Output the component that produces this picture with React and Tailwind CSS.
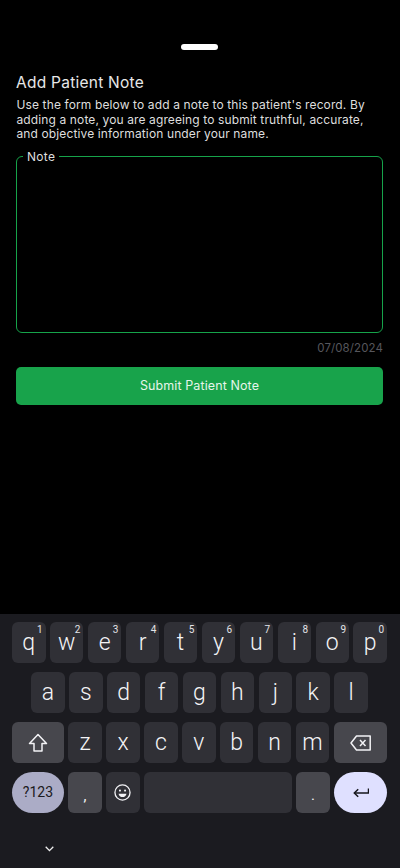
import React from "react";

const kf = { fontFamily: '"Roboto", "Liberation Sans", sans-serif' };

function Key({ label, sup, bg = "bg-[#303036]", className = "", textClass = "text-[23px] font-light" }) {
  return (
    <div className={`relative flex h-[41px] items-center justify-center rounded-[6px] text-[#f4f4f6] ${bg} ${className}`}>
      <span className={`${textClass} leading-none`}>{label}</span>
      {sup && <span className="absolute right-[3px] top-[3px] text-[10px] leading-none text-[#e4e4e8]">{sup}</span>}
    </div>
  );
}

const Shift = () => (
  <svg className="block" width="20" height="20" viewBox="0 0 20 20" fill="none" stroke="#f2f2f5" strokeWidth="1.5" strokeLinejoin="round">
    <path d="M10 1.5 L18.5 10.5 H14 V18 H6 V10.5 H1.5 Z" />
  </svg>
);
const Back = () => (
  <svg className="block" width="21" height="16" viewBox="0 0 21 16" fill="none" stroke="#f2f2f5" strokeWidth="1.5" strokeLinejoin="round">
    <path d="M6.5 1 H20.2 V15 H6.5 L1 8 Z" />
    <path d="M10 5 L15.5 11 M15.5 5 L10 11" />
  </svg>
);
const Smile = () => (
  <svg className="block" width="17" height="17" viewBox="0 0 18 18" fill="none" stroke="#f2f2f5" strokeWidth="1.4">
    <circle cx="9" cy="9" r="8" />
    <circle cx="6.3" cy="7" r="1.1" fill="#f2f2f5" stroke="none" />
    <circle cx="11.7" cy="7" r="1.1" fill="#f2f2f5" stroke="none" />
    <path d="M4.8 10.2 H13.2 C12.8 12.6 11 13.8 9 13.8 C7 13.8 5.2 12.6 4.8 10.2 Z" fill="#f2f2f5" stroke="none" />
  </svg>
);
const Enter = () => (
  <svg className="block" width="16" height="10" viewBox="0 0 16 10" fill="none" stroke="#16161c" strokeWidth="1.5">
    <path d="M15.5 0.5 V5 H1.5" />
    <path d="M5.2 1.3 L1.3 5 L5.2 8.7" />
  </svg>
);

export default function App() {
  const row1 = [["q", "1"], ["w", "2"], ["e", "3"], ["r", "4"], ["t", "5"], ["y", "6"], ["u", "7"], ["i", "8"], ["o", "9"], ["p", "0"]];
  return (
    <div className="flex h-[868px] w-[400px] flex-col overflow-hidden bg-black">
      <div className="flex-1 pl-4 pr-[17px] pt-11" style={{ fontFamily: '"Inter", "Liberation Sans", sans-serif' }}>
        <div className="mx-auto h-[6px] w-[37px] rounded-full bg-white" />
        <h1 className="mt-[22px] text-[15.5px] font-normal leading-[21px] tracking-[0.25px] text-[#e8e8e8]">Add Patient Note</h1>
        <p className="mt-[5px] pl-[0.5px] text-[12px] leading-[14.6px] tracking-[0.12px] text-[#dedede]">
          Use the form below to add a note to this patient's record. By<br />adding a note, you are agreeing to submit truthful, accurate,<br />and objective information under your name.
        </p>
        <fieldset className="mt-[7px] h-[184px] rounded-[6px] border border-[#16a34a] pl-[6px]">
          <legend className="px-[4px] text-[12px] leading-[15px] tracking-[0.3px] text-[#dedede]">Note</legend>
        </fieldset>
        <div className="mt-[7px] text-right text-[11.5px] leading-[16px] tracking-[0.1px] text-[#56565c]">07/08/2024</div>
        <button className="mt-[11px] h-[38px] w-full rounded-[5px] bg-[#18a34b] pt-[2px] text-[12.5px] tracking-[0.1px] text-[#e6f5ea]">Submit Patient Note</button>
      </div>

      <div className="flex h-[254px] flex-col gap-[9px] bg-[#1b1b20] pl-3 pr-[13px] pt-2" style={kf}>
        <div className="grid grid-cols-10 gap-[4.4px]">
          {row1.map(([l, s]) => <Key key={l} label={l} sup={s} />)}
        </div>
        <div className="flex justify-center gap-[4.4px]">
          {"asdfghjkl".split("").map((l) => <Key key={l} label={l} className="w-[33.5px]" />)}
        </div>
        <div className="flex gap-[4.4px]">
          <Key label={<Shift />} bg="bg-[#47474d]" className="w-[52px]" />
          {"zxcvbnm".split("").map((l) => <Key key={l} label={l} className="w-[33.5px]" />)}
          <Key label={<Back />} bg="bg-[#47474d]" className="ml-auto w-[53px]" />
        </div>
        <div className="flex gap-[4.4px]">
          <div className="flex h-[41px] w-[52px] items-center justify-center rounded-full bg-[#abacc6] text-[14px] text-[#1a1a20]">?123</div>
          <Key label="," textClass="text-[15px] pt-[8px]" bg="bg-[#47474d]" className="w-[33.5px]" />
          <Key label={<Smile />} className="w-[33.5px]" />
          <div className="h-[41px] w-[148px] rounded-[6px] bg-[#303036]" />
          <Key label="." textClass="text-[15px] pt-[6px]" bg="bg-[#47474d]" className="w-[33.5px]" />
          <div className="ml-auto flex h-[41px] w-[53px] items-center justify-center rounded-full bg-[#dfe0ff]"><Enter /></div>
        </div>
        <div className="mt-[24px] pl-[33px] text-[#f0f0f0]">
          <svg className="block" width="9" height="6" viewBox="0 0 9 6" fill="none" stroke="currentColor" strokeWidth="1.3"><path d="M0.7 0.8 L4.5 4.6 L8.3 0.8" /></svg>
        </div>
      </div>
    </div>
  );
}
